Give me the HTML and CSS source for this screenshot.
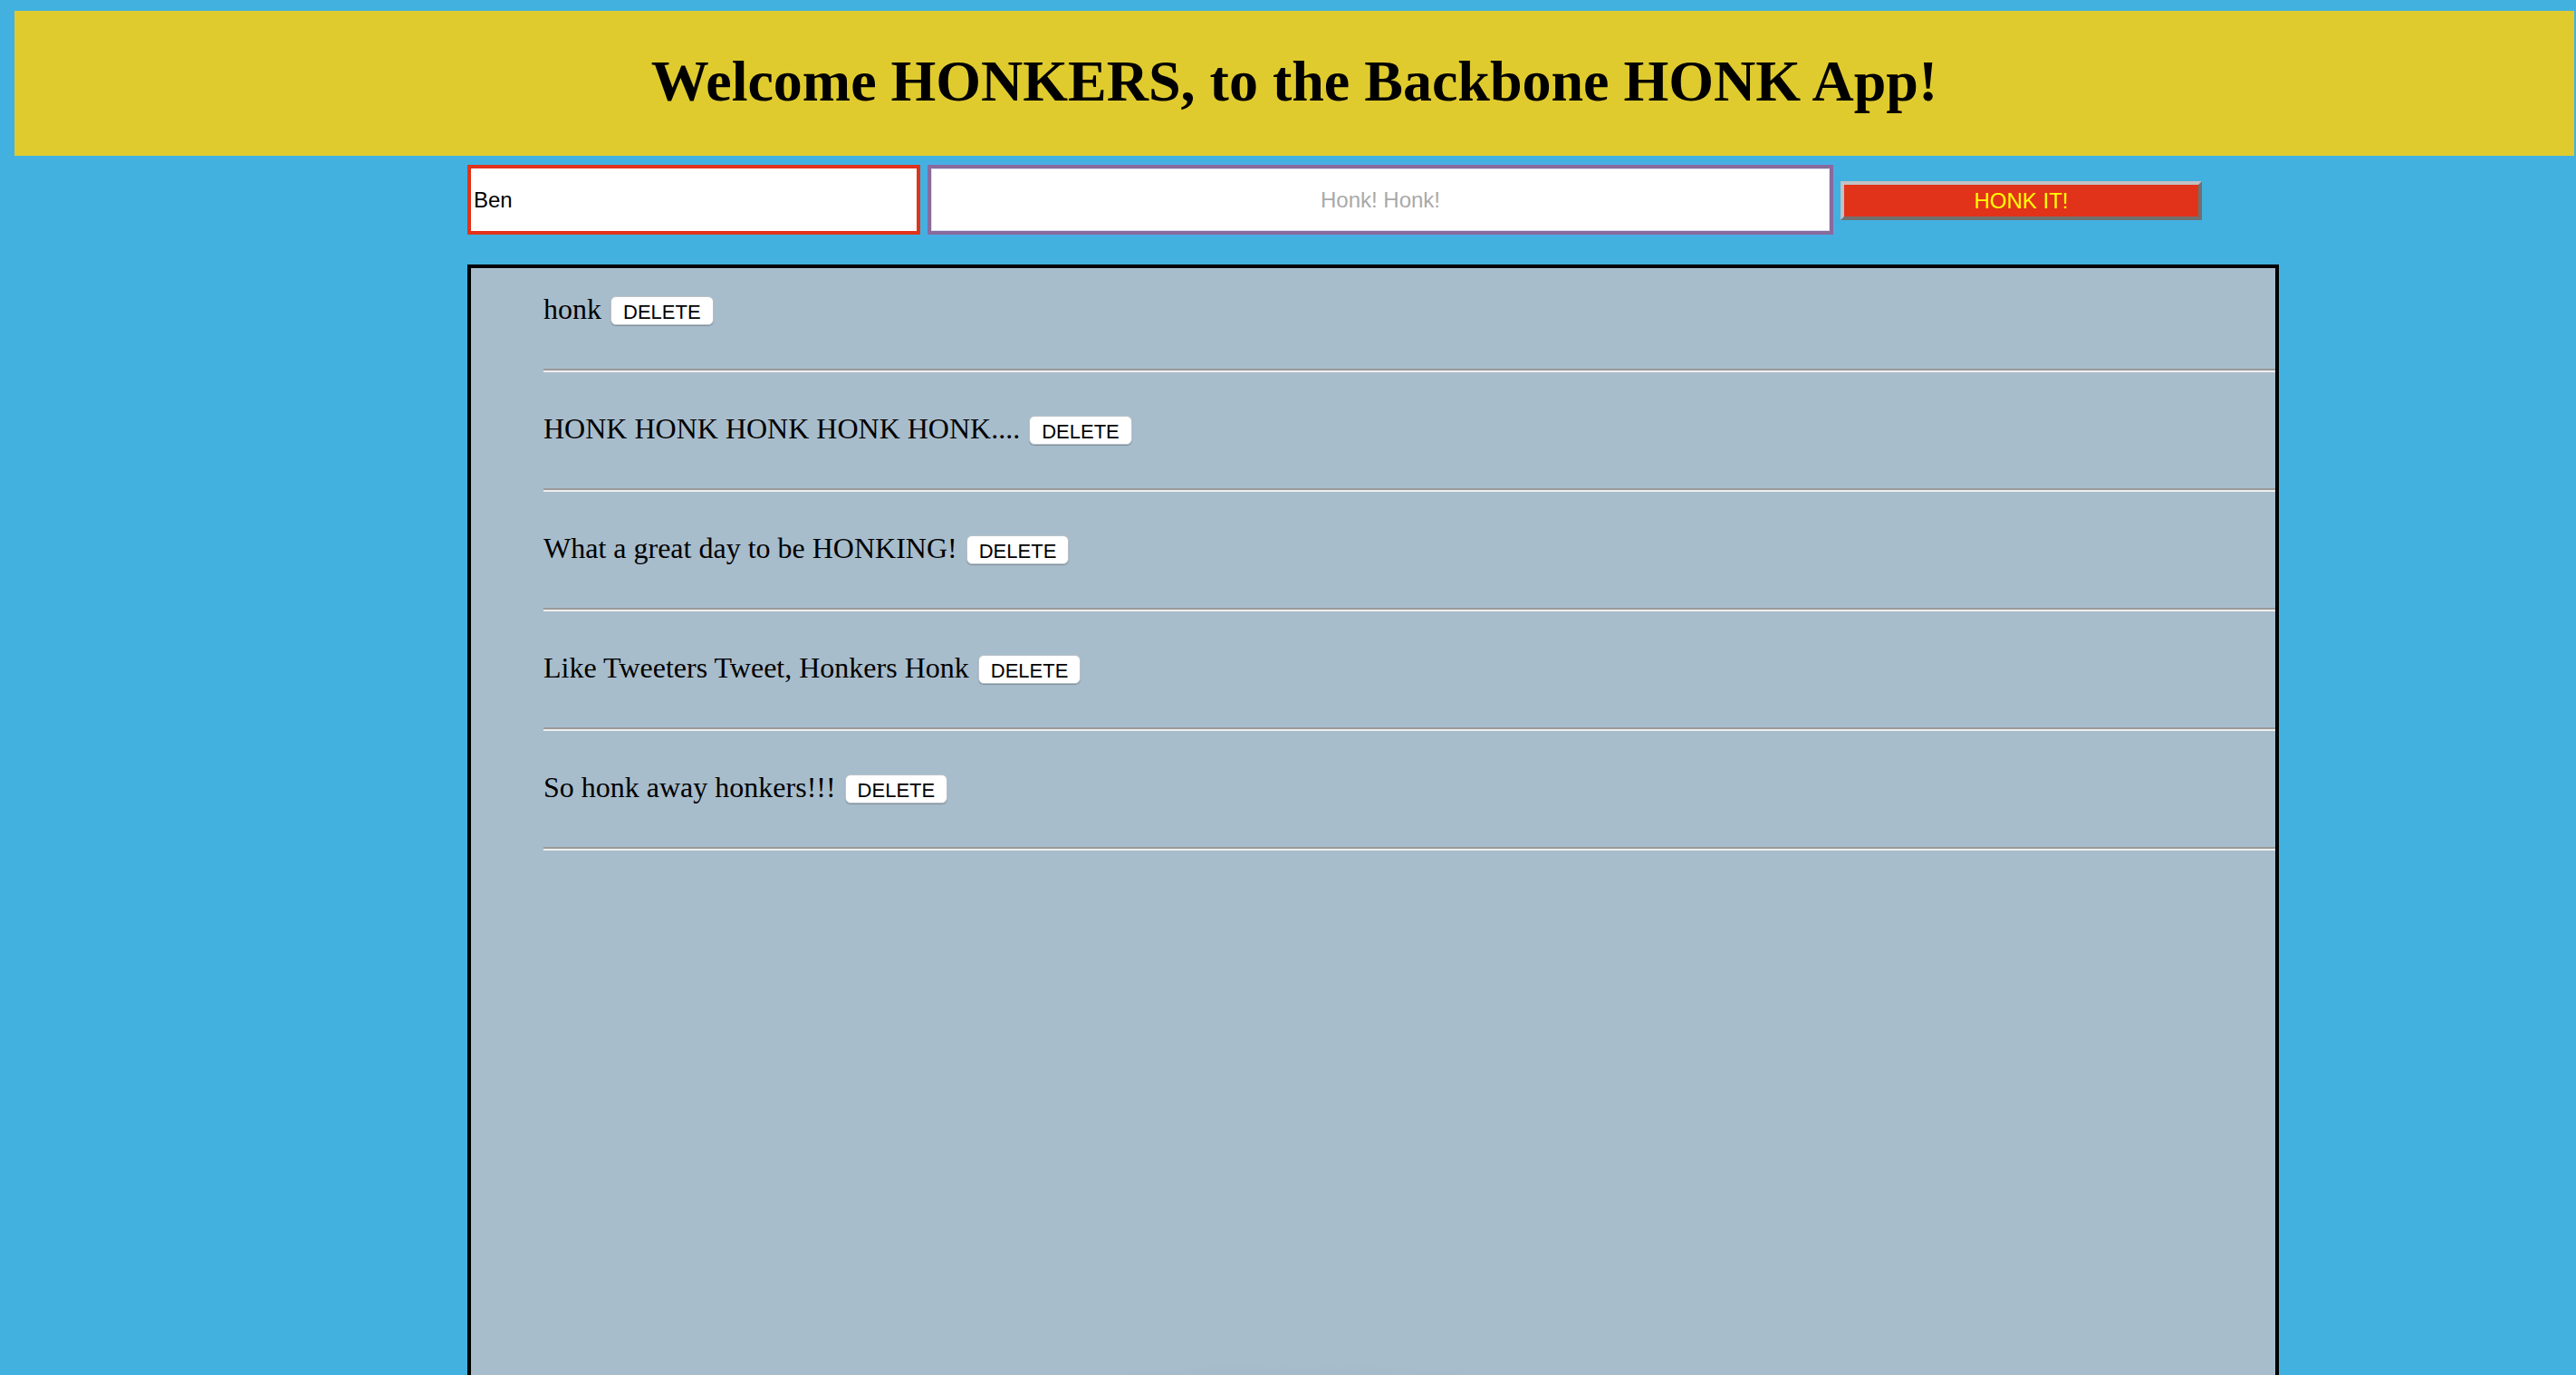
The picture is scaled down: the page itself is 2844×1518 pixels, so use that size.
FILE: index.html
```html
<!DOCTYPE html>
<html lang="en">
<head>
<meta charset="utf-8">
<title>Backbone HONK App</title>
<link rel="stylesheet" href="styles.css">
</head>
<body>
  <header class="banner">
    <h1 class="banner-title">Welcome HONKERS, to the Backbone HONK App!</h1>
  </header>

  <main class="main">
    <form class="honk-form">
      <input class="name-input" type="text" value="Ben">
      <input class="honk-input" type="text" placeholder="Honk! Honk!">
      <button class="honk-button" type="button">HONK IT!</button>
    </form>

    <section class="honk-board">
      <ul class="honk-list">
        <li class="honk-item">
          <div class="honk-row"><span class="honk-text">honk</span> <button class="delete-button" type="button">DELETE</button></div>
          <hr class="honk-rule">
        </li>
        <li class="honk-item">
          <div class="honk-row"><span class="honk-text">HONK HONK HONK HONK HONK....</span> <button class="delete-button" type="button">DELETE</button></div>
          <hr class="honk-rule">
        </li>
        <li class="honk-item">
          <div class="honk-row"><span class="honk-text">What a great day to be HONKING!</span> <button class="delete-button" type="button">DELETE</button></div>
          <hr class="honk-rule">
        </li>
        <li class="honk-item">
          <div class="honk-row"><span class="honk-text">Like Tweeters Tweet, Honkers Honk</span> <button class="delete-button" type="button">DELETE</button></div>
          <hr class="honk-rule">
        </li>
        <li class="honk-item">
          <div class="honk-row"><span class="honk-text">So honk away honkers!!!</span> <button class="delete-button" type="button">DELETE</button></div>
          <hr class="honk-rule">
        </li>
      </ul>
    </section>
  </main>

  <div class="bottom-shade"></div>
</body>
</html>
```

FILE: styles.css
```css
html, body {
  margin: 0;
  padding: 0;
}

body {
  background: #42b1df;
  font-family: "Liberation Serif", "Times New Roman", serif;
  overflow: hidden;
  height: 1518px;
  position: relative;
}

.banner {
  box-sizing: border-box;
  height: 160px;
  margin: 12px 2px 0 16px;
  background: #e0cb2f;
  padding: 41px 0 0;
}

.banner-title {
  margin: 0;
  font-family: "Liberation Serif", "Times New Roman", serif;
  font-weight: bold;
  font-size: 64px;
  line-height: normal;
  text-align: center;
  color: #000;
}

.main {
  padding-left: 516px;
}

.honk-form {
  display: flex;
  align-items: center;
  gap: 8px;
  margin: 10px 0 0;
  height: 77px;
}

.name-input,
.honk-input {
  box-sizing: border-box;
  height: 77px;
  margin: 0;
  background: #fff;
  font-family: "Liberation Sans", Arial, sans-serif;
  font-size: 24px;
  color: #000;
  outline: none;
}

.name-input {
  width: 500px;
  border: 4px solid #e1331a;
  padding: 0 3px;
  text-align: left;
}

.honk-input {
  width: 1000px;
  border: 4px solid #8a6a9c;
  box-shadow: 0 0 0 3px rgba(80, 170, 235, 0.55), inset 0 0 0 1px #d8e2f5;
  text-align: center;
  padding: 0 4px;
}

.honk-input::placeholder {
  color: #a9a9a9;
}

.honk-button {
  box-sizing: border-box;
  width: 399px;
  height: 43px;
  margin: 2px 0 0;
  padding: 0;
  background: #e1331a;
  color: #ffff00;
  font-family: "Liberation Sans", Arial, sans-serif;
  font-size: 24px;
  border-style: solid;
  border-width: 4px;
  border-color: #c2c2c2 #707070 #707070 #c2c2c2;
  border-radius: 0;
}

.honk-board {
  box-sizing: border-box;
  width: 2000px;
  height: 1400px;
  margin-top: 33px;
  background: #a8bdcc;
  border: 4px solid #000;
}

.honk-list {
  list-style: none;
  margin: 0;
  padding: 27px 0 0 80px;
}

.honk-item {
  margin: 0;
}

.honk-row {
  height: 36px;
  line-height: 36px;
  font-size: 32px;
  color: #000;
  white-space: nowrap;
}

.honk-text {
  font-family: "Liberation Serif", "Times New Roman", serif;
  font-size: 32px;
}

.delete-button {
  box-sizing: border-box;
  height: 32px;
  margin-left: 2px;
  padding: 4px 13px 0;
  background: #fff;
  border: 1px solid #b9c2c9;
  border-radius: 6px;
  box-shadow: 0 1px 1px rgba(0, 0, 0, 0.25);
  font-family: "Liberation Sans", Arial, sans-serif;
  font-size: 22px;
  line-height: 26px;
  color: #000;
  vertical-align: baseline;
}

.honk-rule {
  height: 0;
  margin: 48px 0 44px;
  border: none;
  border-top: 2px solid #9a9a9a;
  border-bottom: 2px solid #eeeeee;
}

.bottom-shade {
  position: absolute;
  left: 1040px;
  top: 1420px;
  width: 780px;
  height: 200px;
  background: radial-gradient(ellipse 50% 60% at 50% 100%, rgba(80, 105, 130, 0.14) 0%, rgba(80, 105, 130, 0.08) 55%, rgba(80, 105, 130, 0) 100%);
  pointer-events: none;
}
```
